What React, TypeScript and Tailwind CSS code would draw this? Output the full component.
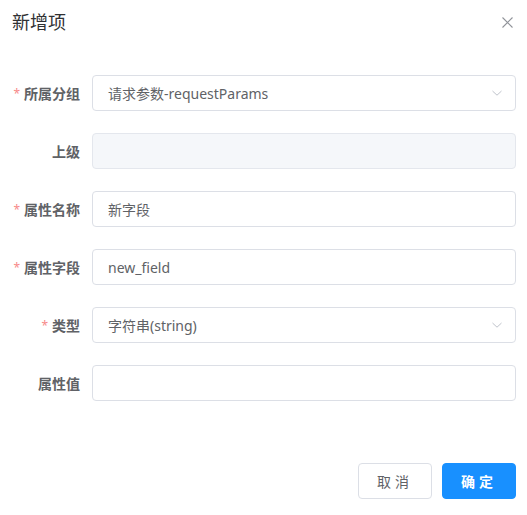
import React from "react";

const font = { fontFamily: '"Noto Sans", "Noto Sans CJK SC", sans-serif' };

type Row = {
  label: string;
  required?: boolean;
  value?: string;
  select?: boolean;
  disabled?: boolean;
};

const rows: Row[] = [
  { label: "所属分组", required: true, value: "请求参数-requestParams", select: true },
  { label: "上级", disabled: true },
  { label: "属性名称", required: true, value: "新字段" },
  { label: "属性字段", required: true, value: "new_field" },
  { label: "类型", required: true, value: "字符串(string)", select: true },
  { label: "属性值" },
];

const Chevron = () => (
  <svg width="12" height="12" viewBox="0 0 12 12" className="text-[#c0c4cc]">
    <path d="M1.5 4 L6 8.2 L10.5 4" fill="none" stroke="currentColor" strokeWidth="1" />
  </svg>
);

const FormRow = ({ row }: { row: Row }) => (
  <div className="flex items-center mb-[22px]">
    <label className="w-[68px] shrink-0 text-right text-[14px] font-bold text-[#606266]">
      {row.required && (
        <span className="mr-[4px] align-[1px] text-[12px] font-normal text-[#f78989]">*</span>
      )}
      {row.label}
    </label>
    <div
      className={`ml-[12px] flex h-[36px] flex-1 items-center justify-between rounded-[4px] border pl-[15px] pr-[12px] text-[14px] text-[#606266] ${
        row.disabled ? "border-[#e4e7ed] bg-[#f5f7fa]" : "border-[#dcdfe6] bg-white"
      }`}
    >
      <span>{row.value}</span>
      {row.select && <Chevron />}
    </div>
  </div>
);

export default function App() {
  return (
    <div style={font} className="relative h-[515px] w-[527px] bg-white pl-[12px] pr-[11px]">
      <div className="flex h-[44px] items-center justify-between">
        <h2 className="text-[18px] leading-[24px] text-[#303133]">新增项</h2>
        <button className="mr-[3px] text-[#909399]">
          <svg width="11" height="11" viewBox="0 0 11 11">
            <path d="M0.5 0.5 L10.5 10.5 M10.5 0.5 L0.5 10.5" stroke="currentColor" strokeWidth="1.1" />
          </svg>
        </button>
      </div>
      <div className="pt-[31px]">
        {rows.map((r) => (
          <FormRow key={r.label} row={r} />
        ))}
      </div>
      <div className="mt-[62px] flex justify-end gap-[10px]">
        <button className="h-[36px] w-[74px] rounded-[4px] border border-[#dcdfe6] bg-white text-[14px] tracking-[4px] text-[#606266]">
          取消
        </button>
        <button className="h-[36px] w-[74px] rounded-[4px] border border-[#1890ff] bg-[#1890ff] text-[14px] font-bold tracking-[4px] text-white">
          确定
        </button>
      </div>
    </div>
  );
}
